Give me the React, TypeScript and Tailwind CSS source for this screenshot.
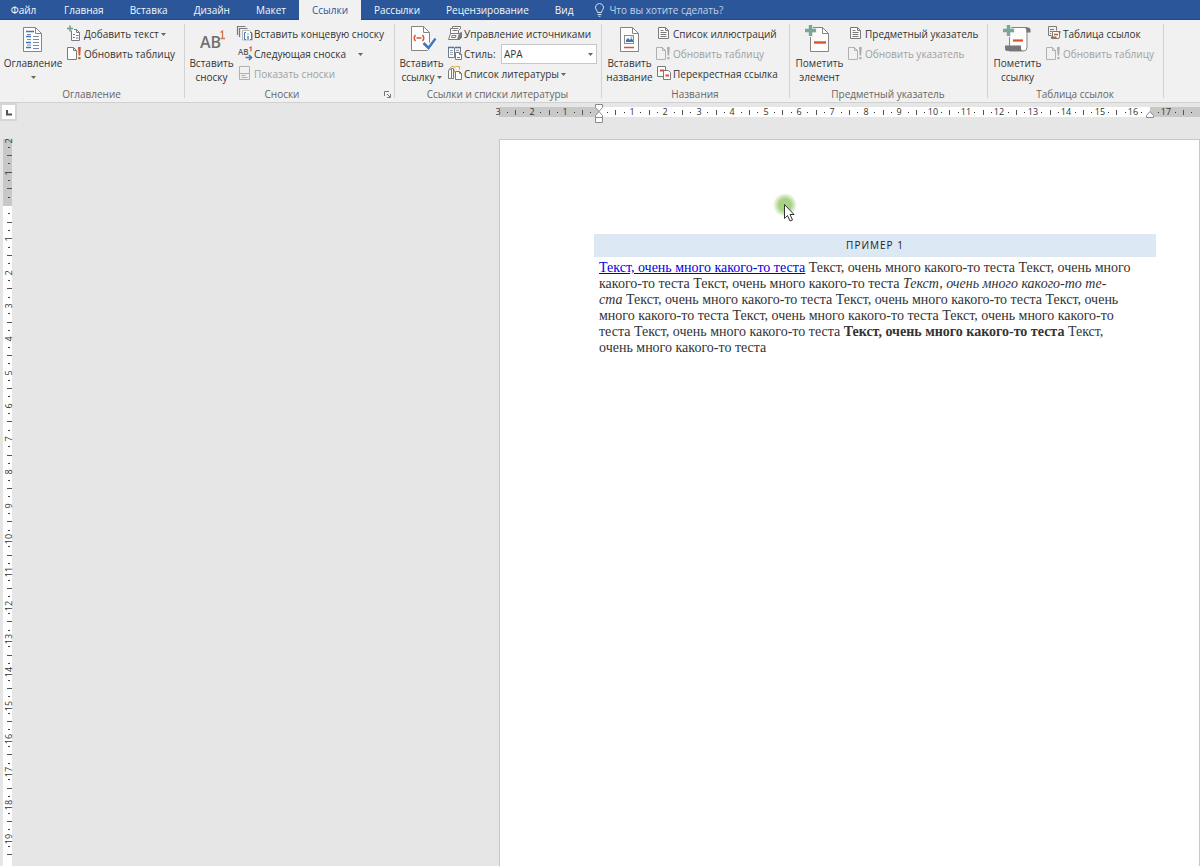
import type { ReactNode } from "react";

const tabs = [
  { name: "Главная" },
  { name: "Вставка" },
  { name: "Дизайн" },
  { name: "Макет" },
  { name: "Ссылки", active: true },
  { name: "Рассылки" },
  { name: "Рецензирование" },
  { name: "Вид" },
];

const PAPER = "#fdfdfd";
const INK = "#7a7a7a";

function Caret() {
  return (
    <svg width="5" height="3" viewBox="0 0 5 3" className="shrink-0" aria-hidden="true">
      <path d="M0 0h5L2.5 3z" fill="#666" />
    </svg>
  );
}

function Big({ children }: { children: ReactNode }) {
  return (
    <svg width="30" height="30" viewBox="0 0 30 30" fill="none" className="shrink-0 overflow-visible" aria-hidden="true">
      {children}
    </svg>
  );
}

function Small({ children }: { children: ReactNode }) {
  return (
    <svg width="16" height="16" viewBox="0 0 16 16" fill="none" className="shrink-0 overflow-visible" aria-hidden="true">
      {children}
    </svg>
  );
}

function BigSheet() {
  return (
    <>
      <path d="M5.5 2.5h12l6 6v18h-18z" fill={PAPER} stroke="#858585" />
      <path d="M17.5 2.5v6h6" stroke="#858585" />
    </>
  );
}

function TocIcon() {
  return (
    <Big>
      <BigSheet />
      <path d="M8 6.5h8M8 11.5h5M8 17.5h5M8 22.5h5" stroke="#3f74b5" strokeWidth="1.300" />
      <path d="M9 9.500h4M9 14.500h4M9 20h4M15 11.500h6M15 14.500h6M15 17.500h6M15 20.500h6M15 23.500h6" stroke="#7a8ca3" />
    </Big>
  );
}

function FootnoteIcon() {
  return (
    <Big>
      <text x="3" y="23" fontSize="16" fontWeight="600" fontFamily="Open Sans, sans-serif" fill="#707070">
        AB
      </text>
      <path d="M23.500 7.500l2-1.500v7M23.500 13.500h4.500" stroke="#d0784f" strokeWidth="1.300" />
    </Big>
  );
}

function CitationIcon() {
  return (
    <Big>
      <path d="M4.500 1.500h12l6 6v18h-18z" fill={PAPER} stroke="#858585" />
      <path d="M16.500 1.500v6h6" stroke="#858585" />
      <path d="M8.500 10q-2.500 3 0 6M15.500 10q2.500 3 0 6M9.500 13h5" stroke="#d9532c" strokeWidth="1.500" />
      <path d="M17 18.500l4.500 4.500 7-10" stroke={PAPER} strokeWidth="4.500" />
      <path d="M16.500 18l5 5 7-9.500" stroke="#4577bd" strokeWidth="2.600" />
    </Big>
  );
}

function CaptionIcon() {
  return (
    <Big>
      <BigSheet />
      <rect x="9.500" y="10.500" width="9" height="8" stroke="#8c8c8c" />
      <path d="M11 17v-2l2-2 2 2 1-2 2 2v2z" fill="#3f74b5" />
      <circle cx="16.500" cy="12.500" r="1" fill="#e3a64b" />
      <path d="M9 22.500h10" stroke="#d9532c" strokeWidth="1.500" />
    </Big>
  );
}

function PlusMark() {
  return (
    <>
      <path d="M5.500 0v12M0 5.500h12" stroke="#f1f1f1" strokeWidth="5" />
      <path d="M5.500 0v11M0 5.500h11" stroke="#7ba596" strokeWidth="3.400" />
    </>
  );
}

function MarkEntryIcon() {
  return (
    <Big>
      <BigSheet />
      <path d="M9 17.500h12" stroke="#d9532c" strokeWidth="2.400" />
      <PlusMark />
    </Big>
  );
}

function MarkCitationIcon() {
  return (
    <Big>
      <path d="M6.500 20V4.500q0-2 2-2H24V22q0 4-3 4H6z" fill={PAPER} stroke="#858585" />
      <path d="M22 2.500h3q2.500 0 2.500 2.500v2.500h-4V5z" fill="#777" />
      <path d="M2 20.500h16v3q0 2.500 3 2.500H4.500Q2 26 2 23.500z" fill="#777" />
      <path d="M10 15.500h10" stroke="#d9532c" strokeWidth="2.200" />
      <PlusMark />
    </Big>
  );
}

function AddTextIcon() {
  return (
    <Small>
      <path d="M3.500 4.500v10h8V6.500l-3-3H6" fill={PAPER} stroke={INK} />
      <path d="M8.500 3.500v3h3" stroke={INK} />
      <path d="M5 8.500h2M5 11.500h2M8 9.500h2.500M8 12h2.500" stroke="#5d7fa8" />
      <path d="M2 -0.500v6M-1 2.500h6" stroke="#6d9c8c" strokeWidth="1.500" />
    </Small>
  );
}

function UpdateIcon({ disabled = false }: { disabled?: boolean }) {
  return (
    <Small>
      <path d="M-0.500 1.500h6l3 3v9h-9z" fill={disabled ? "#f1f1f1" : PAPER} stroke={disabled ? "#b0b0b0" : INK} />
      <path d="M5.500 1.500v3h3" stroke={disabled ? "#b0b0b0" : INK} />
      <path d="M10 1h2.800l-.6 8.500h-1.600zM10.300 11h2.200v2.200h-2.200z" fill={disabled ? "#adadad" : "#d9532c"} />
    </Small>
  );
}

function EndnoteIcon() {
  return (
    <Small>
      <path d="M-0.500 9V0.500h8M1.500 11V2.500h8" stroke={INK} strokeWidth="1.200" />
      <path d="M4.500 14V4.500h7l3 3V14z" fill={PAPER} stroke="#b5b5b5" />
      <path d="M8 6.500H6.500v7H8M12 6.500h1.500v7H12" stroke="#4b76a8" />
      <path d="M10 7.500v1M10 10v3.500" stroke="#4b76a8" strokeWidth="1.300" />
    </Small>
  );
}

function NextFootnoteIcon() {
  return (
    <Small>
      <text x="0" y="9" fontSize="8" fontWeight="600" fontFamily="Open Sans, sans-serif" fill="#5c5c5c">
        AB
      </text>
      <path d="M11.500 2l1.500-1v4.500" stroke="#d9532c" strokeWidth="1.200" />
      <path d="M7.500 11.500h6M11 9l2.500 2.500L11 14" stroke="#3f74b5" strokeWidth="1.600" />
    </Small>
  );
}

function ShowNotesIcon() {
  return (
    <Small>
      <path d="M1.500 0.500h10v13h-10zM1.500 7.500h10" stroke="#b0b0b0" />
      <path d="M3.500 9.500h4M3.500 11.500h6" stroke="#b0b0b0" />
    </Small>
  );
}

function SourcesIcon() {
  return (
    <Small>
      <path d="M2.500 8V2.500h2v-2h8v2l-2 2v3" fill={PAPER} stroke={INK} />
      <path d="M4.500 2.500h6M4.500 4.500h5" stroke={INK} />
      <path d="M2.500 7.500h9l-2 6h-9z" fill={PAPER} stroke={INK} />
      <path d="M11.500 7.500l2-1v5l-2 2h-2" fill={INK} stroke={INK} />
      <path d="M4 9.500h4l-.5 2H3.500z" stroke={INK} />
    </Small>
  );
}

function StyleIcon() {
  return (
    <Small>
      <path d="M0.500 1.500v10h6v-10M12.500 1.500v5" fill={PAPER} stroke={INK} />
      <path d="M0 1.500h6M7 1.500h6" stroke="#4b76a8" strokeWidth="1.300" />
      <path d="M2 4.500h3M2 6.500h3M2 8.500h3M8 4.500h3" stroke="#8ba3c2" />
      <path d="M7.500 6.500h4l2 2v5h-6z" fill={PAPER} stroke={INK} />
      <path d="M11.500 6.500v2h2M9 11.500h3" stroke={INK} />
    </Small>
  );
}

function BibliographyIcon() {
  return (
    <Small>
      <path d="M0.500 4.500l3-2v10h-3zM3.500 2.500h2v10h-2" fill={PAPER} stroke={INK} />
      <path d="M0.500 3.500l3-3h3M6.500 1.500l2-1h3v3M6.500 3.500v3" stroke="#dba84b" />
      <path d="M7.500 5.500h4l2 2v6h-6z" fill={PAPER} stroke={INK} />
      <path d="M11.500 5.500v2h2" stroke={INK} />
    </Small>
  );
}

function ListSheetIcon() {
  return (
    <Small>
      <path d="M1.500 1.500h7l3 3v8h-10z" fill={PAPER} stroke={INK} />
      <path d="M8.500 1.500v3h3M3.500 4.500h3M3.500 6.500h6M3.500 8.500h6M3.500 10.500h6" stroke={INK} />
    </Small>
  );
}

function CrossRefIcon() {
  return (
    <Small>
      <path d="M0.500 0.500h8v10h-8z" fill={PAPER} stroke={INK} />
      <path d="M6.500 4.500h5l2 2v7h-7z" fill={PAPER} stroke={INK} />
      <path d="M3 4.500h4M8.500 9.500h3.500" stroke="#d9532c" strokeWidth="1.800" />
    </Small>
  );
}

function AuthoritiesIcon() {
  return (
    <Small>
      <path d="M1.500 0.500h8v4M1.500 0.500v9h3" stroke={INK} />
      <path d="M3 3.500h4M3 5.500h2M3 7.500h1" stroke="#5d7fa8" />
      <path d="M5.500 11V5.500h7V11q0 1.500-1.500 1.500H5" fill={PAPER} stroke={INK} />
      <path d="M11 5h2.500v2.500H12zM3.500 10.500h6v2.500h-5z" fill={INK} />
      <path d="M7 8.500h4" stroke="#d9532c" strokeWidth="1.600" />
    </Small>
  );
}

function Group({ label, width, launcher, children }: { label: string; width: string; launcher?: boolean; children: ReactNode }) {
  return (
    <section aria-label={label} className={`relative flex shrink-0 flex-col justify-between pt-1 ${width}`}>
      <div className="flex">{children}</div>
      <div className={`flex h-4 items-center justify-center text-[#666] ${launcher ? "pr-4" : "pr-0.5"}`}>{label}</div>
      {launcher && (
        <button type="button" aria-label="Параметры сносок" className="absolute right-1 bottom-1">
          <svg width="7" height="7" viewBox="0 0 7 7" fill="none" stroke="#777" aria-hidden="true">
            <path d="M0.500 5V0.500H5M3 3l3 3M6.500 3v3.500H3" />
          </svg>
        </button>
      )}
      <span className="absolute top-1 right-0 bottom-1 w-px bg-[#d2d2d2]" />
    </section>
  );
}

function BigButton({ icon, lines, width, caret }: { icon: ReactNode; lines: string[]; width: string; caret?: boolean }) {
  return (
    <button type="button" className={`flex shrink-0 flex-col items-center pt-px leading-[14px] ${width}`}>
      {icon}
      <span className="mt-px whitespace-nowrap">{lines[0]}</span>
      <span className="flex h-[14px] items-center gap-0.5 whitespace-nowrap">
        {lines[1]}
        {caret && <Caret />}
      </span>
    </button>
  );
}

function SmallButton({ icon, label, caret, disabled }: { icon: ReactNode; label: string; caret?: string; disabled?: boolean }) {
  return (
    <button type="button" disabled={disabled} className="flex h-5 items-center whitespace-nowrap disabled:text-[#a0a0a0]">
      {icon}
      <span>{label}</span>
      {caret && (
        <span className={`flex ${caret}`}>
          <Caret />
        </span>
      )}
    </button>
  );
}

const CM = 33.4;

function quarters(from: number, to: number) {
  return Array.from({ length: (to - from) * 4 + 1 }, (_, i) => from + i / 4);
}

function HorizontalRuler() {
  return (
    <svg width="704" height="24" viewBox="-4 0 704 24" className="block" role="img" aria-label="Горизонтальная линейка">
      <rect x="-1" y="4" width="701" height="10" fill="#c8c8c8" />
      <rect x="99" y="4" width="551" height="10" fill="#fff" />
      {quarters(-3, 18).map((v) => {
        const x = Math.round(98.6 + v * CM);
        if (v === 0 || v === 16.5 || v === 18) return null;
        if (Number.isInteger(v))
          return (
            <text key={v} x={x} y="12" textAnchor="middle" fontSize="9" fontFamily="Open Sans, sans-serif" fill="#333">
              {Math.abs(v)}
            </text>
          );
        if (v % 0.5 === 0) return <rect key={v} x={x} y="7" width="1" height="5" fill="#555" />;
        return <rect key={v} x={x} y="9" width="1" height="1" fill="#333" />;
      })}
      <g fill="#fff" stroke="#8a8a8a">
        <path d="M95.500 1.500h7v3l-3.500 4-3.500-4zM95.500 14.500v-2l3.500-4 3.500 4v2zM95.500 14.500h7v5h-7z" />
        <path d="M646.500 14.500v-2l3.500-4 3.500 4v2z" />
      </g>
    </svg>
  );
}

function VerticalRuler() {
  return (
    <div className="ml-[3px] w-[9px] shrink-0 bg-white">
      <svg width="9" height="728" viewBox="3 0 9 728" className="block overflow-visible" role="img" aria-label="Вертикальная линейка">
        <rect x="3" y="0" width="9" height="67" fill="#c8c8c8" />
        {quarters(-2, 20).map((v) => {
          const y = Math.round(67 + v * 33.3);
          if (v === 0 || v > 19.5) return null;
          if (Number.isInteger(v))
            return (
              <text key={v} transform={`translate(12 ${Math.max(y, 2)}) rotate(-90)`} textAnchor="middle" fontSize="9" fontFamily="Open Sans, sans-serif" fill="#333">
                {Math.abs(v)}
              </text>
            );
          if (v % 0.5 === 0) return <rect key={v} x="7" y={y - 1} width="5" height="1" fill="#555" />;
          return <rect key={v} x="8" y={y - 1} width="2" height="1" fill="#444" />;
        })}
      </svg>
    </div>
  );
}

export default function App() {
  return (
    <div className="flex h-screen flex-col overflow-hidden bg-[#e6e6e6] font-['Open_Sans',sans-serif] text-[10px] text-[#333]">
      <nav
        aria-label="Вкладки ленты"
        className="flex h-5 shrink-0 items-stretch border-b border-[#234a86] bg-[#2b579a] whitespace-nowrap text-[#f4f7fb]"
      >
        <button type="button" className="w-[51px] shrink-0 pt-px pr-1">
          Файл
        </button>
        {tabs.map((t) => (
          <button key={t.name} type="button" className={`px-[13px] pt-px ${t.active ? "-mb-px bg-[#f1f1f1] text-[#2b579a]" : ""}`}>
            {t.name}
          </button>
        ))}
        <label className="ml-2 flex flex-1 items-center gap-1 pt-px text-[#c3d2e8]">
          <svg width="11" height="14" viewBox="0 0 11 14" fill="none" stroke="#d5e0f0" className="shrink-0" aria-hidden="true">
            <path d="M3.500 9.500Q3.500 8 2.300 6.900a4 4 0 1 1 6.400 0Q7.500 8 7.500 9.500zM3.500 11.500h4M4.500 13.300h2" />
          </svg>
          <input aria-label="Помощник" placeholder="Что вы хотите сделать?" className="w-40 bg-transparent outline-none placeholder:text-[#c3d2e8]" />
        </label>
      </nav>

      <div className="flex h-[83px] shrink-0 border-b border-[#d0d0d0] bg-[#f1f1f1]">
        <Group label="Оглавление" width="w-[185px]">
          <BigButton icon={<TocIcon />} lines={["Оглавление", ""]} width="w-[68px] pr-0.5" caret />
          <div>
            <SmallButton icon={<AddTextIcon />} label="Добавить текст" caret="ml-0.5" />
            <SmallButton icon={<UpdateIcon />} label="Обновить таблицу" />
          </div>
        </Group>
        <Group label="Сноски" width="w-[210px]" launcher>
          <BigButton icon={<FootnoteIcon />} lines={["Вставить", "сноску"]} width="w-[53px]" />
          <div>
            <SmallButton icon={<EndnoteIcon />} label="Вставить концевую сноску" />
            <SmallButton icon={<NextFootnoteIcon />} label="Следующая сноска" caret="ml-3" />
            <SmallButton icon={<ShowNotesIcon />} label="Показать сноски" disabled />
          </div>
        </Group>
        <Group label="Ссылки и списки литературы" width="w-[207px]">
          <BigButton icon={<CitationIcon />} lines={["Вставить", "ссылку"]} width="w-[53px]" caret />
          <div>
            <SmallButton icon={<SourcesIcon />} label="Управление источниками" />
            <div className="flex h-5 items-center">
              <StyleIcon />
              <label htmlFor="citation-style" className="w-[37px]">
                Стиль:
              </label>
              <div className="relative">
                <select id="citation-style" className="block h-5 w-24 appearance-none border border-[#c6c6c6] bg-white pl-0.5 outline-none">
                  <option>APA</option>
                </select>
                <span className="pointer-events-none absolute inset-y-0 right-1 flex items-center">
                  <Caret />
                </span>
              </div>
            </div>
            <SmallButton icon={<BibliographyIcon />} label="Список литературы" caret="ml-0.5" />
          </div>
        </Group>
        <Group label="Названия" width="w-[188px]">
          <BigButton icon={<CaptionIcon />} lines={["Вставить", "название"]} width="w-[55px]" />
          <div>
            <SmallButton icon={<ListSheetIcon />} label="Список иллюстраций" />
            <SmallButton icon={<UpdateIcon disabled />} label="Обновить таблицу" disabled />
            <SmallButton icon={<CrossRefIcon />} label="Перекрестная ссылка" />
          </div>
        </Group>
        <Group label="Предметный указатель" width="w-[198px]">
          <BigButton icon={<MarkEntryIcon />} lines={["Пометить", "элемент"]} width="w-[59px]" />
          <div>
            <SmallButton icon={<ListSheetIcon />} label="Предметный указатель" />
            <SmallButton icon={<UpdateIcon disabled />} label="Обновить указатель" disabled />
          </div>
        </Group>
        <Group label="Таблица ссылок" width="w-[176px]">
          <BigButton icon={<MarkCitationIcon />} lines={["Пометить", "ссылку"]} width="w-[59px]" />
          <div>
            <SmallButton icon={<AuthoritiesIcon />} label="Таблица ссылок" />
            <SmallButton icon={<UpdateIcon disabled />} label="Обновить таблицу" disabled />
          </div>
        </Group>
      </div>

      <div className="flex h-9 shrink-0 items-start justify-between">
        <button type="button" aria-label="Тип табуляции" className="border-2 border-[#d6d6d6] bg-white">
          <svg width="13" height="14" viewBox="0 0 13 14" fill="none" aria-hidden="true">
            <path d="M5 5v4.500h5" stroke="#555" strokeWidth="2" />
          </svg>
        </button>
        <HorizontalRuler />
      </div>

      <main className="flex min-h-0 flex-1 justify-between">
        <VerticalRuler />
        <article className="relative w-[701px] shrink-0 border border-b-0 border-[#c8c8c8] bg-white pt-[94px] pr-[43px] pl-[94px] text-[#333]">
          <h1 className="flex h-[23px] items-center justify-center bg-[#dce8f4] text-[10px] tracking-widest text-[#222]">ПРИМЕР 1</h1>
          <p className="pt-[3px] pl-[5px] font-['Liberation_Serif',serif] text-[14px] leading-4 whitespace-nowrap">
            <a href="#example" className="text-[#0000e6] underline">
              Текст, очень много какого-то теста
            </a>{" "}
            Текст, очень много какого-то теста Текст, очень много
            <br />
            какого-то теста Текст, очень много какого-то теста <i>Текст, очень много какого-то те-</i>
            <br />
            <i>ста</i> Текст, очень много какого-то теста Текст, очень много какого-то теста Текст, очень
            <br />
            много какого-то теста Текст, очень много какого-то теста Текст, очень много какого-то
            <br />
            теста Текст, очень много какого-то теста <b>Текст, очень много какого-то теста</b> Текст,
            <br />
            очень много какого-то теста
          </p>
          <div className="pointer-events-none absolute top-[53px] left-[273px]">
            <svg width="24" height="30" viewBox="0 0 24 30" aria-hidden="true">
              <defs>
                <radialGradient id="halo">
                  <stop offset="0.500" stopColor="#a9d184" />
                  <stop offset="1" stopColor="#a9d184" stopOpacity="0" />
                </radialGradient>
              </defs>
              <circle cx="12" cy="12" r="12" fill="url(#halo)" />
              <path d="M11.500 11.500v14l3-3 2.500 5.500 2.500-1-2.500-5.500h4z" fill="#fff" stroke="#333" />
            </svg>
          </div>
        </article>
      </main>
    </div>
  );
}
